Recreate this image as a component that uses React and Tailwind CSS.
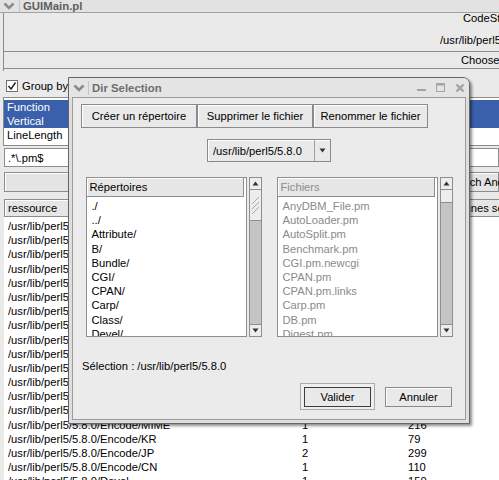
import React from "react";

const dirs = ["./", "../", "Attribute/", "B/", "Bundle/", "CGI/", "CPAN/", "Carp/", "Class/", "Devel/"];
const files = [
  "AnyDBM_File.pm",
  "AutoLoader.pm",
  "AutoSplit.pm",
  "Benchmark.pm",
  "CGI.pm.newcgi",
  "CPAN.pm",
  "CPAN.pm.links",
  "Carp.pm",
  "DB.pm",
  "Digest.pm",
];

const rows = [
  ["/usr/lib/perl5/5.8.0", "12", "3021"],
  ["/usr/lib/perl5/5.8.0/Attribute", "1", "88"],
  ["/usr/lib/perl5/5.8.0/B", "3", "412"],
  ["/usr/lib/perl5/5.8.0/Bundle", "1", "46"],
  ["/usr/lib/perl5/5.8.0/CGI", "6", "1420"],
  ["/usr/lib/perl5/5.8.0/CPAN", "2", "310"],
  ["/usr/lib/perl5/5.8.0/Carp", "1", "72"],
  ["/usr/lib/perl5/5.8.0/Class", "1", "64"],
  ["/usr/lib/perl5/5.8.0/Devel", "2", "188"],
  ["/usr/lib/perl5/5.8.0/Digest", "1", "95"],
  ["/usr/lib/perl5/5.8.0/Encode", "8", "960"],
  ["/usr/lib/perl5/5.8.0/Encode/Unicode", "1", "120"],
  ["/usr/lib/perl5/5.8.0/Encode/TW", "1", "81"],
  ["/usr/lib/perl5/5.8.0/Encode/Symbol", "1", "77"],
  ["/usr/lib/perl5/5.8.0/Encode/MIME", "1", "216"],
  ["/usr/lib/perl5/5.8.0/Encode/KR", "1", "79"],
  ["/usr/lib/perl5/5.8.0/Encode/JP", "2", "299"],
  ["/usr/lib/perl5/5.8.0/Encode/CN", "1", "110"],
  ["/usr/lib/perl5/5.8.0/Devel", "1", "150"],
];

function Chevron({ className }) {
  return (
    <svg width="12" height="8" viewBox="0 0 12 8" className={className}>
      <path d="M1.5 1.5 L6 6 L10.5 1.5" fill="none" stroke="#8a8a8a" strokeWidth="2.6" />
    </svg>
  );
}

function Tri({ down }) {
  return (
    <svg width="7" height="5" viewBox="0 0 7 5">
      <path d={down ? "M0.5 0.5 L6.5 0.5 L3.5 4.5 Z" : "M0.5 4.5 L6.5 4.5 L3.5 0.5 Z"} fill="#333" />
    </svg>
  );
}

function Scrollbar({ thumb, hatched }) {
  return (
    <div className="flex w-[13px] flex-col border border-[#8e8e8e] bg-[#c4c4c4]">
      <div className="flex h-[12px] items-center justify-center border-b border-[#8e8e8e] bg-[#ededed]">
        <Tri />
      </div>
      <div className={`${thumb} flex items-center justify-center border-b border-[#8e8e8e] bg-[#ededed]`}>
        {hatched && (
          <svg width="9" height="20" viewBox="0 0 9 20">
            <path d="M1 9 L8 2 M1 14 L8 7 M1 19 L8 12" stroke="#a8a8a8" strokeWidth="1" />
          </svg>
        )}
      </div>
      <div className="flex-1" />
      <div className="flex h-[12px] items-center justify-center border-t border-[#8e8e8e] bg-[#ededed]">
        <Tri down />
      </div>
    </div>
  );
}

function ListPanel({ title, items, muted, thumb, hatched }) {
  return (
    <div className="flex w-[176px] gap-[2px]">
      <div className="flex w-[161px] flex-col overflow-hidden border border-[#8e8e8e] bg-white">
        <div
          className={`h-[19px] shrink-0 border-b border-r border-[#8e8e8e] mr-[2px] bg-[#e6e6e6] pl-[3px] leading-[19px] shadow-[inset_1px_1px_0_#fff] ${
            muted ? "text-[#8c8c8c]" : "text-black"
          }`}
        >
          {title}
        </div>
        <div className={`pt-[2px] pl-[5px] ${muted ? "text-[#8a8a8a]" : "text-black"}`}>
          {items.map((it) => (
            <div key={it} className="h-[14.2px] leading-[14.2px] whitespace-nowrap">
              {it}
            </div>
          ))}
        </div>
      </div>
      <Scrollbar thumb={thumb} hatched={hatched} />
    </div>
  );
}

function DirDialog() {
  return (
    <div className="absolute left-[68px] top-[77px] flex h-[347px] w-[402px] flex-col rounded-tr-[7px] border border-[#666] bg-[#dedede] shadow-[2px_2px_3px_rgba(0,0,0,0.45)]">
      <div className="flex h-[19px] shrink-0 items-center rounded-tr-[6px] bg-[#e4e4e4]">
        <Chevron className="ml-[4px]" />
        <div className="ml-[3px] h-[14px] w-px bg-[#c6c6c6]" />
        <span className="ml-[3px] text-[11.4px] font-bold text-[#6e6e6e]">Dir Selection</span>
        <div className="ml-auto mr-[4px] flex items-center gap-[10px]">
          <svg width="9" height="9" viewBox="0 0 9 9">
            <rect x="0" y="6" width="9" height="2" fill="#a4a4a4" />
          </svg>
          <svg width="9" height="9" viewBox="0 0 9 9">
            <rect x="0.5" y="0.5" width="8" height="8" fill="none" stroke="#a4a4a4" />
            <rect x="0.5" y="0.5" width="8" height="2" fill="#a4a4a4" />
          </svg>
          <svg width="10" height="10" viewBox="0 0 10 10">
            <path d="M1.5 1.5 L8.5 8.5 M8.5 1.5 L1.5 8.5" stroke="#a4a4a4" strokeWidth="2.4" />
          </svg>
        </div>
      </div>

      <div className="mx-[3px] mb-[3px] flex flex-1 flex-col border border-[#9c9c9c] bg-[#ebebeb] px-[8px]">
        <div className="mt-[6px] flex h-[24px]">
          {[
            ["Créer un répertoire", "w-[116px]"],
            ["Supprimer le fichier", "w-[116px]"],
            ["Renommer le fichier", "w-[115px]"],
          ].map(([label, w]) => (
            <div
              key={label}
              className={`${w} flex items-center justify-center border border-[#8a8a8a] bg-[#e9e9e9] shadow-[inset_1px_1px_0_#fff] whitespace-nowrap`}
            >
              {label}
            </div>
          ))}
        </div>

        <div className="mt-[11px] flex h-[23px] w-[124px] self-center border border-[#8a8a8a] bg-[#e9e9e9] shadow-[inset_1px_1px_0_#fff]">
          <div className="flex w-[106px] items-center pl-[5px] whitespace-nowrap">/usr/lib/perl5/5.8.0</div>
          <div className="flex flex-1 items-center justify-center border-l border-[#a0a0a0]">
            <Tri down />
          </div>
        </div>

        <div className="mt-[15px] flex h-[160px] justify-center gap-[15px]">
          <ListPanel title="Répertoires" items={dirs} thumb="h-[31px]" hatched />
          <ListPanel title="Fichiers" items={files} muted thumb="h-[13px]" />
        </div>

        <div className="mt-[22px] pl-[1px] leading-[14px] whitespace-nowrap">Sélection : /usr/lib/perl5/5.8.0</div>

        <div className="mt-[10px] flex items-center justify-end gap-[10px] pr-[5px]">
          <div className="flex h-[27px] w-[75px] items-center justify-center border border-[#ababab] bg-[#efefef]">
            <div className="flex h-[20px] w-[67px] items-center justify-center border-[1.5px] border-[#3c3c3c] bg-[#e9e9e9]">
              Valider
            </div>
          </div>
          <div className="flex h-[20px] w-[67px] items-center justify-center border border-[#8a8a8a] bg-[#e9e9e9] shadow-[inset_1px_1px_0_#fff]">
            Annuler
          </div>
        </div>
      </div>
    </div>
  );
}

export default function App() {
  return (
    <div className="relative flex h-[480px] w-[499px] flex-col overflow-hidden bg-[#eaeaea] text-[11.2px] leading-[14px] text-black font-['Liberation_Sans',Arial,sans-serif]">
      {/* main window title */}
      <div className="flex h-[13px] shrink-0 items-center border-b border-[#a2a2a2] bg-[#e2e2e2]">
        <Chevron className="ml-[3px]" />
        <div className="ml-[4px] h-[12px] w-px bg-[#c4c4c4]" />
        <span className="ml-[3px] text-[11.4px] font-bold leading-[12px] text-[#5e5e5e]">GUIMain.pl</span>
      </div>

      {/* top group */}
      <div className="ml-[3px] flex shrink-0 flex-col border-l border-[#8c8c8c] pb-[2px]">
        <div className="h-[11px] pl-[459px] leading-[11px] whitespace-nowrap">CodeStats</div>
        <div className="mt-[10px] h-[12px] pl-[436px] leading-[12px] whitespace-nowrap">/usr/lib/perl5/5.8.0</div>
        <div className="mt-[5px] h-[18px] border-y border-[#8c8c8c] pl-[457px] leading-[16px] whitespace-nowrap">
          Choose directory
        </div>
      </div>

      {/* group by */}
      <div className="mt-[8px] flex h-[14px] shrink-0 items-center pl-[6px]">
        <div className="flex h-[12px] w-[12px] items-center justify-center border border-[#6e6e6e] bg-white">
          <svg width="10" height="10" viewBox="0 0 10 10">
            <path d="M1.5 5 L4 8 L8.5 1.5" fill="none" stroke="#222" strokeWidth="1.4" />
          </svg>
        </div>
        <span className="ml-[4px] whitespace-nowrap">Group by</span>
      </div>

      {/* listbox */}
      <div className="ml-[3px] mt-[4px] shrink-0 border-y border-l border-[#8c8c8c] bg-white pt-[2px] pb-[3px]">
        <div className="h-[14px] bg-[#3b60ab] pl-[3px] text-white">Function</div>
        <div className="h-[14px] bg-[#3b60ab] pl-[3px] text-white">Vertical</div>
        <div className="h-[14px] pl-[3px]">LineLength</div>
      </div>

      {/* filter input */}
      <div className="ml-[4px] mt-[2px] flex h-[19px] shrink-0 items-center border border-[#8c8c8c] bg-white pl-[3px]">
        .*\.pm$
      </div>

      {/* action button */}
      <div className="ml-[4px] mt-[5px] flex h-[20px] shrink-0 items-center border border-[#8c8c8c] bg-[#e4e4e4] pl-[441px] shadow-[inset_1px_1px_0_#fff] whitespace-nowrap">
        Search And Display
      </div>

      {/* table header */}
      <div className="ml-[4px] mt-[7px] flex h-[18px] shrink-0 whitespace-nowrap">
        <div className="w-[294px] shrink-0 border border-[#8c8c8c] bg-[#e6e6e6] pl-[3px] leading-[16px] shadow-[inset_1px_1px_0_#fff]">ressource</div>
        <div className="w-[106px] shrink-0 border border-[#8c8c8c] bg-[#e6e6e6] pl-[3px] leading-[16px]">fichiers</div>
        <div className="w-[53px] shrink-0 border border-[#8c8c8c] bg-[#e6e6e6] pl-[3px] leading-[16px]">lignes</div>
        <div className="w-[120px] shrink-0 border border-[#8c8c8c] bg-[#e6e6e6] pl-[4px] leading-[16px]">Lines selected</div>
      </div>

      {/* table body */}
      <div className="ml-[4px] flex-1 bg-white pt-[2px]">
        {rows.map(([path, n, size], i) => (
          <div key={i} className="flex h-[14.2px] leading-[14.2px] whitespace-nowrap">
            <div className="w-[294px] shrink-0 pl-[4px]">{path}</div>
            <div className="w-[106px] shrink-0 pl-[4px]">{n}</div>
            <div className="shrink-0 pl-[4px]">{size}</div>
          </div>
        ))}
      </div>

      <DirDialog />
    </div>
  );
}
